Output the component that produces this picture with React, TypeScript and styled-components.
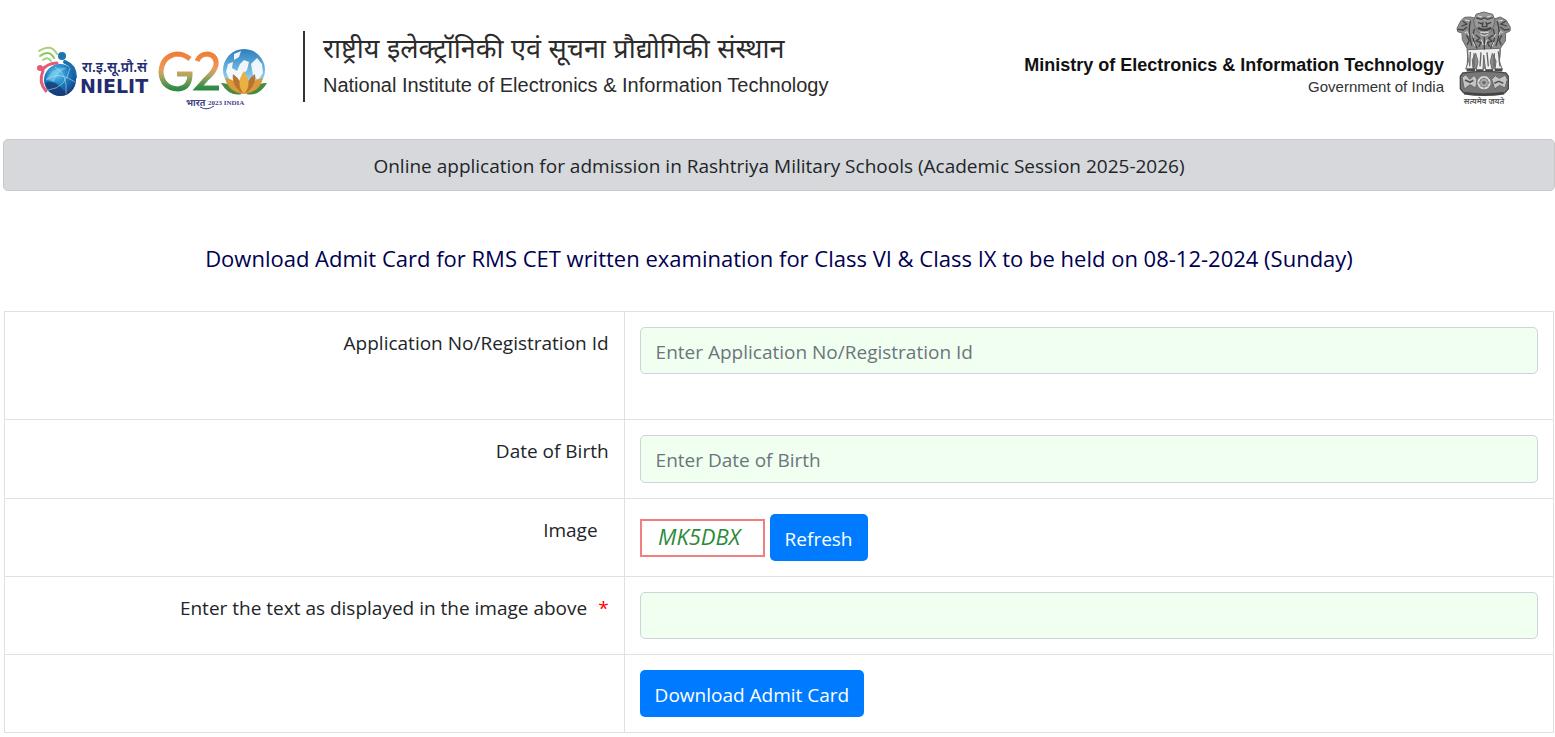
import React from "react";
import styled, { createGlobalStyle } from "styled-components";

const GlobalStyle = createGlobalStyle`
  *, *::before, *::after { box-sizing: border-box; }
  body {
    margin: 0;
    background: #fff;
    color: #212529;
    font-family: "Segoe UI", "Open Sans", "Noto Sans", sans-serif;
    font-size: 19px;
    line-height: 30px;
  }
`;

const Page = styled.div`
  padding-left: 3px;
`;

const Header = styled.header`
  display: flex;
  align-items: flex-start;
  padding: 10px 42px 27px 33px;
  font-family: "Liberation Sans", Arial, "Noto Sans Devanagari", sans-serif;
`;

const Logos = styled.svg`
  flex: none;
  width: 232px;
  height: 68px;
  margin-top: 34px;
`;

const Institute = styled.div`
  height: 71px;
  margin: 21px 0 0 35px;
  padding-left: 18px;
  border-left: 2px solid #333;
  white-space: nowrap;
  color: #2b2b2b;
`;

const HindiName = styled.div`
  font-size: 27px;
  line-height: 37px;
`;

const EnglishName = styled.div`
  font-size: 20px;
  line-height: 34px;
`;

const Ministry = styled.div`
  margin: 44px 11px 0 auto;
  text-align: right;
  white-space: nowrap;
  font-size: 15px;
  line-height: 22px;
  color: #333;
`;

const MinistryName = styled.div`
  font-size: 18px;
  font-weight: bold;
  color: #111;
`;

const EmblemArt = styled.svg`
  flex: none;
  width: 58px;
  height: 98px;
`;

const Banner = styled.div`
  padding: 11px 20px 9px;
  border: 1px solid #c6c8ca;
  border-radius: 5px;
  background: #d6d8db;
  text-align: center;
`;

const Title = styled.h1`
  margin: 50px 0 36px;
  text-align: center;
  font-size: 22px;
  font-weight: 400;
  line-height: 34px;
  color: #000050;
`;

const FormTable = styled.table`
  width: calc(100% - 2px);
  margin: 0 1px;
  border-collapse: collapse;
  table-layout: fixed;
`;

const LabelCell = styled.th`
  width: 40%;
  padding: 16px 15px;
  border: 1px solid #dee2e6;
  text-align: right;
  vertical-align: top;
  font-weight: 400;
`;

const FieldCell = styled.td<{ $roomy?: boolean }>`
  padding: 15px 15px ${(p) => (p.$roomy ? "45px" : "15px")};
  border: 1px solid #dee2e6;
  vertical-align: top;
`;

const Input = styled.input<{ $tall?: boolean }>`
  display: block;
  width: 100%;
  height: ${(p) => (p.$tall ? "48px" : "47px")};
  padding: 9px 15px 7px;
  border: 1px solid #ced4da;
  border-radius: 5px;
  background: #f0fff0;
  color: #495057;
  font: inherit;
  &::placeholder { color: #6c757d; opacity: 1; }
`;

const CaptchaRow = styled.div`
  display: flex;
  align-items: center;
  gap: 5px;
`;

const Captcha = styled.div`
  width: 125px;
  height: 38px;
  padding-right: 6px;
  border: 2px solid #f08080;
  text-align: center;
  font: italic 22px/30px "Open Sans", sans-serif;
  color: #2b8a3a;
`;

const Button = styled.button`
  height: 47px;
  padding: 2px 15px 0;
  border: 0;
  border-radius: 5px;
  background: #007bff;
  color: #fff;
  font: inherit;
  cursor: pointer;
`;

const Required = styled.span`
  margin-left: 6px;
  color: #f00;
`;

const Caption = styled.label<{ $inset?: boolean }>`
  margin-right: ${(p) => (p.$inset ? "11px" : "0")};
`;

function LogoArt() {
  return (
    <Logos viewBox="36 44 232 68" role="img" aria-label="NIELIT and G20">
      <defs>
        <linearGradient id="flag" x1="0" y1="0" x2="0" y2="1">
          <stop offset="0" stopColor="#f07f35" />
          <stop offset="0.45" stopColor="#ec9a62" />
          <stop offset="0.62" stopColor="#a8a860" />
          <stop offset="1" stopColor="#2f8a45" />
        </linearGradient>
        <radialGradient id="ball" cx="0.4" cy="0.3" r="0.75">
          <stop offset="0" stopColor="#62c8ee" />
          <stop offset="0.5" stopColor="#1a7cbe" />
          <stop offset="1" stopColor="#143a7c" />
        </radialGradient>
        <linearGradient id="earth" x1="0" y1="0" x2="0" y2="1">
          <stop offset="0" stopColor="#2c7dbd" />
          <stop offset="0.6" stopColor="#7cc3e8" />
          <stop offset="1" stopColor="#d8eef8" />
        </linearGradient>
      </defs>
      <g fill="none" strokeLinecap="round">
        <path d="M39 51Q51 43 57 54" stroke="#a5d37c" strokeWidth="2" />
        <path d="M40 56Q49 49 54 58" stroke="#8cc860" strokeWidth="2" />
        <path d="M43 60Q48 56 51 61" stroke="#a5d37c" strokeWidth="2" />
        <path d="M43 71Q38 82 46 91" stroke="#e45c78" strokeWidth="3" />
        <path d="M42 70Q48 63 57 63" stroke="#e45c78" strokeWidth="3" />
        <path d="M65 62Q75 66 75 77" stroke="#1d6ea8" strokeWidth="4" />
      </g>
      <circle cx="40" cy="68" r="3" fill="#e45c78" />
      <circle cx="62" cy="56" r="4" fill="#1d75ae" />
      <circle cx="60" cy="80" r="16" fill="url(#ball)" />
      <path d="M45 83Q54 79 61 88T75 86Q70 96 60 96Q49 95 45 83Z" fill="#173872" opacity="0.75" />
      <path d="M46 79Q54 66 67 68Q58 71 54 82Z" fill="#8fd8f3" opacity="0.5" />
      <path d="M46 80Q58 70 75 82M55 67Q68 74 66 94M48 90Q66 88 70 68" fill="none" stroke="#d3f0fb" strokeWidth="1" opacity="0.5" />
      <g fill="#232c70">
        <text x="82" y="72" fontSize="14" fontWeight="600" fontFamily="Noto Sans Devanagari, sans-serif">रा.इ.सू.प्रौ.सं</text>
        <text x="80" y="93" fontSize="19" fontWeight="700" fontFamily="DejaVu Sans, sans-serif">NIELIT</text>
      </g>
      <path d="M190 59Q184 54 177 54Q162 56 161 72Q162 88 178 89Q190 88 190 74H177" fill="none" stroke="url(#flag)" strokeWidth="5" />
      <path d="M197 61Q200 54 208 54Q217 56 216 65Q215 71 206 79L198 88H219" fill="none" stroke="url(#flag)" strokeWidth="5" />
      <circle cx="244" cy="70" r="21" fill="url(#earth)" />
      <g fill="#fff" opacity="0.9">
        <path d="M226 72L228 64L233 62L232 68L237 71L240 64L244 60L249 62L247 70L241 77L237 85L230 81Z" />
        <path d="M251 64L257 58L262 64L263 73L258 80L253 75Z" />
        <path d="M234 54L241 51L239 57L234 60Z" />
      </g>
      <g>
        <path d="M221 83Q230 82 242 94Q229 97 221 83ZM267 83Q258 82 246 94Q259 97 267 83Z" fill="#478c3f" />
        <path d="M225 78Q237 79 244 94Q228 92 225 78ZM263 78Q251 79 244 94Q260 92 263 78Z" fill="#d99a3b" />
        <path d="M233 74Q242 80 244 94Q231 87 233 74ZM255 74Q246 80 244 94Q257 87 255 74Z" fill="#b9752e" />
        <path d="M244 71Q235 84 244 94Q253 84 244 71Z" fill="#eab044" />
      </g>
      <g fill="#42428a">
        <text x="186" y="106" fontSize="9" fontWeight="700" fontFamily="Noto Sans Devanagari, sans-serif">भारत</text>
        <text x="208" y="105" fontSize="7" fontWeight="700" fontFamily="Liberation Serif, serif">2023 INDIA</text>
      </g>
      <path d="M200 107Q207 111 214 106" fill="none" stroke="#42428a" />
    </Logos>
  );
}

function Emblem() {
  return (
    <EmblemArt viewBox="30 15 174 294" role="img" aria-label="State Emblem of India">
      <g fill="#8c8c8c" stroke="#6a6a6a" strokeWidth="3" strokeLinejoin="round">
        <path d="M91 40L76 36L58 37L47 48L36 70L38 80L51 84L52 104L66 130L68 154L66 190L160 190L165 153L166 130L181 108L182 84L195 78L196 67L184 46L166 36L144 43Z" />
        <path d="M68 134L70 170L62 192H84L82 164L92 145L99 170L93 196H114L116 150L122 196H142L136 170L142 145L153 168L150 193H172L163 170L165 130Z" fill="#eee" />
        <path d="M93 28L116 21L143 28L150 45L147 60L138 80L119 88L98 80L89 62L86 47Z" fill="#999" />
      </g>
      <g fill="none" stroke="#444" strokeWidth="4" strokeLinecap="round">
        <path d="M95 39L109 43L118 38L128 43L142 38M101 53L112 57M126 57L137 53M114 52L112 65H126L123 52" />
        <path d="M101 70Q118 79 136 70" strokeWidth="8" />
        <path d="M54 49L65 57L51 63M39 73L55 75L65 67M181 49L168 57L184 63M192 73L178 75L167 67" />
        <path d="M76 49Q68 81 80 121M88 73Q77 102 96 129M157 50Q169 81 153 122M145 73Q155 102 137 129" />
        <path d="M93 91L104 99L94 108L108 113L102 124M143 91L131 99L141 108L127 113L133 124M118 96V132M65 92L73 106L67 118M170 92L162 106L168 118" />
      </g>
      <g fill="none" stroke="#ddd" strokeWidth="3" strokeLinecap="round">
        <path d="M61 45L73 48M172 46L161 48M60 83L67 80L71 90M173 82L166 80L162 90M83 87L86 97M151 88L147 97M107 88L118 93L129 88M85 112L90 123M147 112L142 123M110 105L114 119M126 105L121 119M99 33L109 35M137 33L128 35M107 82H130" />
      </g>
      <g fill="none" stroke="#666" strokeWidth="4">
        <path d="M76 141L74 184M87 145V186M108 142L105 184M126 142L130 184M148 145L147 186M160 139L165 184" />
        <path d="M65 195H90M94 197H115M122 197H145M149 195H172" stroke="#4a4a4a" strokeWidth="9" />
      </g>
      <path d="M53 204Q118 194 183 204L190 214V251L180 263Q117 270 55 263L46 251V214Z" fill="#777" stroke="#4a4a4a" strokeWidth="4" />
      <path d="M51 217L63 209L74 223L88 211L97 225L92 249L75 239L58 252ZM140 223L151 212L163 220L181 210L187 224L180 249L164 241L149 252Z" fill="#c4c4c4" stroke="#666" strokeWidth="3" />
      <path d="M60 225L75 232L85 226M148 235L161 229L175 235" fill="none" stroke="#555" strokeWidth="5" />
      <circle cx="117" cy="233" r="22" fill="#ddd" stroke="#777" strokeWidth="4" />
      <circle cx="117" cy="233" r="13" fill="#b5b5b5" stroke="#777" strokeWidth="3" />
      <path d="M117 215V251M99 233H135M104 220L130 246M130 220L104 246" stroke="#888" strokeWidth="2" />
      <circle cx="117" cy="233" r="5" fill="#666" />
      <path d="M57 265Q117 274 178 265" fill="none" stroke="#444" strokeWidth="7" />
      <text x="117" y="296" textAnchor="middle" fontSize="24" fontWeight="600" fill="#555" fontFamily="Noto Sans Devanagari, sans-serif">सत्यमेव जयते</text>
    </EmblemArt>
  );
}

export default function App() {
  return (
    <Page>
      <GlobalStyle />
      <Header>
        <LogoArt />
        <Institute>
          <HindiName lang="hi">राष्ट्रीय इलेक्ट्रॉनिकी एवं सूचना प्रौद्योगिकी संस्थान</HindiName>
          <EnglishName>National Institute of Electronics &amp; Information Technology</EnglishName>
        </Institute>
        <Ministry>
          <MinistryName>Ministry of Electronics &amp; Information Technology</MinistryName>
          <div>Government of India</div>
        </Ministry>
        <Emblem />
      </Header>
      <Banner>Online application for admission in Rashtriya Military Schools (Academic Session 2025-2026)</Banner>
      <Title>Download Admit Card for RMS CET written examination for Class VI &amp; Class IX to be held on 08-12-2024 (Sunday)</Title>
      <form onSubmit={(e) => e.preventDefault()}>
        <FormTable>
          <tbody>
            <tr>
              <LabelCell scope="row"><Caption htmlFor="application">Application No/Registration Id</Caption></LabelCell>
              <FieldCell $roomy><Input id="application" placeholder="Enter Application No/Registration Id" /></FieldCell>
            </tr>
            <tr>
              <LabelCell scope="row"><Caption htmlFor="birth">Date of Birth</Caption></LabelCell>
              <FieldCell><Input id="birth" $tall placeholder="Enter Date of Birth" /></FieldCell>
            </tr>
            <tr>
              <LabelCell scope="row"><Caption as="span" $inset>Image</Caption></LabelCell>
              <FieldCell>
                <CaptchaRow>
                  <Captcha>MK5DBX</Captcha>
                  <Button type="button">Refresh</Button>
                </CaptchaRow>
              </FieldCell>
            </tr>
            <tr>
              <LabelCell scope="row">
                <Caption htmlFor="captcha">Enter the text as displayed in the image above <Required>*</Required></Caption>
              </LabelCell>
              <FieldCell><Input id="captcha" autoComplete="off" /></FieldCell>
            </tr>
            <tr>
              <LabelCell as="td" />
              <FieldCell><Button type="submit">Download Admit Card</Button></FieldCell>
            </tr>
          </tbody>
        </FormTable>
      </form>
    </Page>
  );
}
